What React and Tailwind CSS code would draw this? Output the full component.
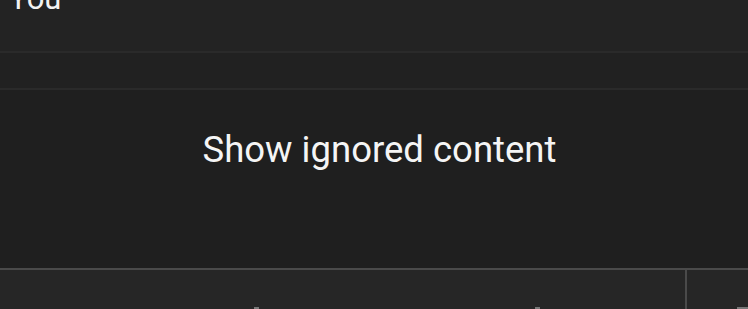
import React from "react";

const App = () => {
    return (
        <div
            className="w-[748px] h-[309px] overflow-hidden bg-[#1f1f1f] text-white flex flex-col"
            style={{ fontFamily: "Roboto, 'Liberation Sans', sans-serif" }}
        >
            {/* Header row, mostly scrolled off */}
            <div className="h-[51px] shrink-0 bg-[#232323] relative overflow-hidden">
                <span className="absolute left-[9px] bottom-[37px] text-[31px] leading-none text-[#f2f2f2]">You</span>
            </div>
            <div className="h-[2px] shrink-0 bg-[#2a2a2a]" />
            <div className="h-[35px] shrink-0 bg-[#212121]" />
            <div className="h-[2px] shrink-0 bg-[#2a2a2a]" />

            {/* Ignored content placeholder */}
            <div className="h-[178px] shrink-0 bg-[#1f1f1f] flex justify-center pt-[33px] pl-[11px]">
                <button className="h-[54px] text-[36.5px] leading-[54px] text-[#f5f5f5]">Show ignored content</button>
            </div>

            {/* Bottom toolbar */}
            <div className="h-[2px] shrink-0 bg-[#4a4a4a]" />
            <div className="flex-1 flex bg-[#262626]">
                <div className="w-[685px] relative">
                    <span className="absolute left-[254px] bottom-0 w-[5px] h-[2px] bg-[#777]" />
                    <span className="absolute left-[535px] bottom-0 w-[5px] h-[2px] bg-[#777]" />
                </div>
                <div className="w-[2px] bg-[#4a4a4a]" />
                <div className="flex-1 relative">
                    <span className="absolute right-0 bottom-0 w-[11px] h-[2px] bg-[#777]" />
                </div>
            </div>
        </div>
    );
};

export default App;
